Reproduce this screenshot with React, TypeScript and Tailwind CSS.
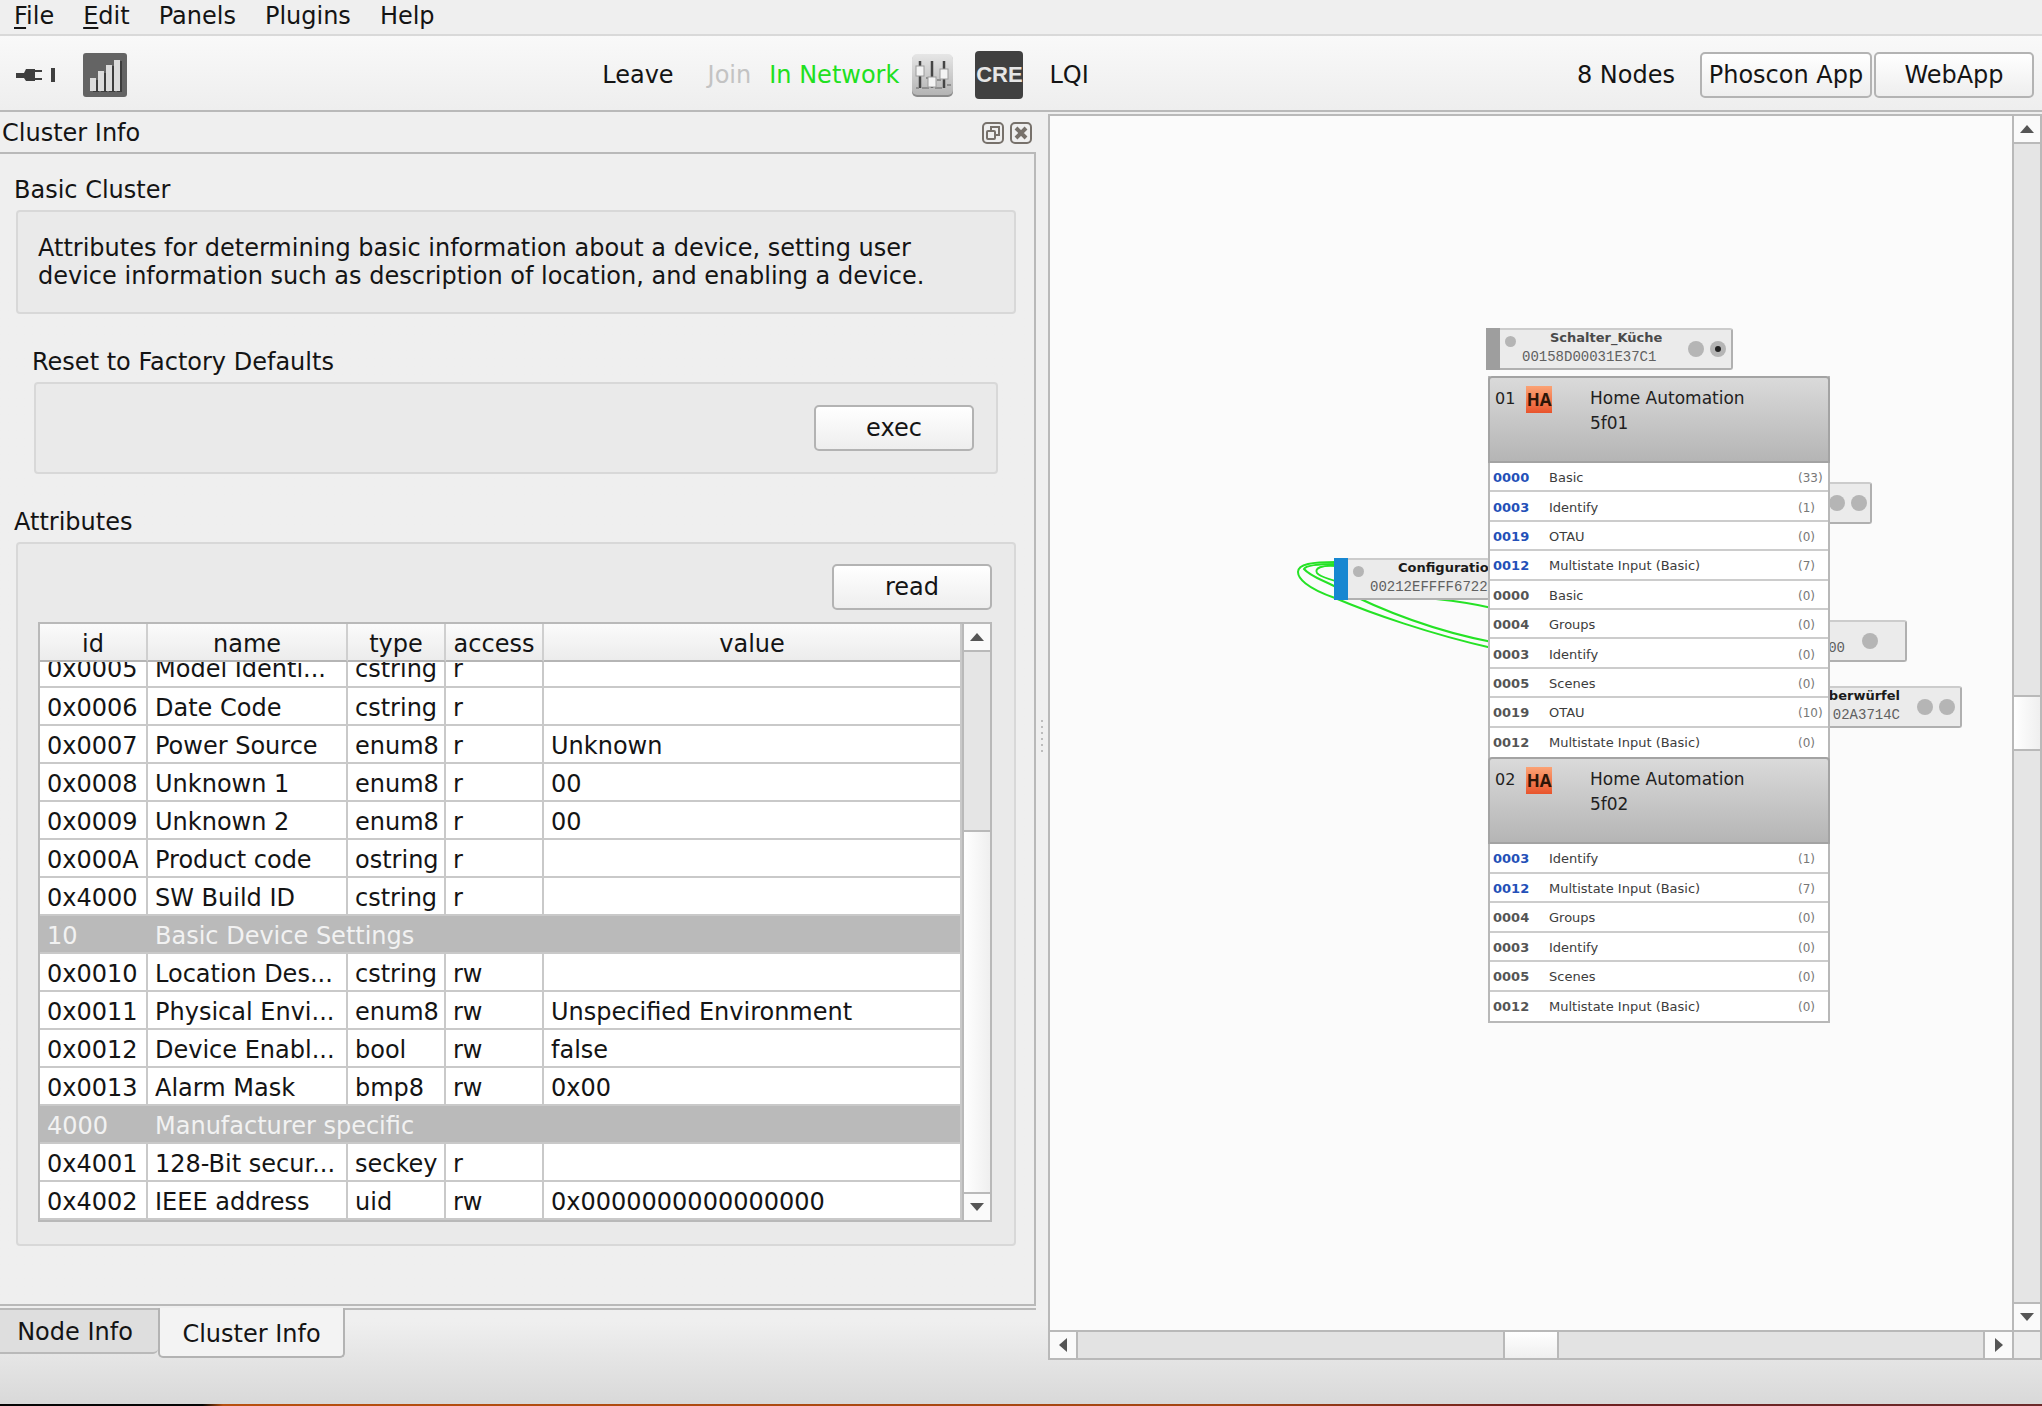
import { useState } from 'react';

const MENUS = ['File', 'Edit', 'Panels', 'Plugins', 'Help'];

const ATTRIBUTES = [
  { id: '0x0006', name: 'Date Code', type: 'cstring', access: 'r', value: '' },
  { id: '0x0007', name: 'Power Source', type: 'enum8', access: 'r', value: 'Unknown' },
  { id: '0x0008', name: 'Unknown 1', type: 'enum8', access: 'r', value: '00' },
  { id: '0x0009', name: 'Unknown 2', type: 'enum8', access: 'r', value: '00' },
  { id: '0x000A', name: 'Product code', type: 'ostring', access: 'r', value: '' },
  { id: '0x4000', name: 'SW Build ID', type: 'cstring', access: 'r', value: '' },
  { id: '10', name: 'Basic Device Settings', section: true },
  { id: '0x0010', name: 'Location Des...', type: 'cstring', access: 'rw', value: '' },
  { id: '0x0011', name: 'Physical Envi...', type: 'enum8', access: 'rw', value: 'Unspecified Environment' },
  { id: '0x0012', name: 'Device Enabl...', type: 'bool', access: 'rw', value: 'false' },
  { id: '0x0013', name: 'Alarm Mask', type: 'bmp8', access: 'rw', value: '0x00' },
  { id: '4000', name: 'Manufacturer specific', section: true },
  { id: '0x4001', name: '128-Bit secur...', type: 'seckey', access: 'r', value: '' },
  { id: '0x4002', name: 'IEEE address', type: 'uid', access: 'rw', value: '0x0000000000000000' },
];

const ENDPOINTS = [
  {
    id: '01',
    device: '5f01',
    clusters: [
      { id: '0000', name: 'Basic', count: 33, server: true },
      { id: '0003', name: 'Identify', count: 1, server: true },
      { id: '0019', name: 'OTAU', count: 0, server: true },
      { id: '0012', name: 'Multistate Input (Basic)', count: 7, server: true },
      { id: '0000', name: 'Basic', count: 0 },
      { id: '0004', name: 'Groups', count: 0 },
      { id: '0003', name: 'Identify', count: 0 },
      { id: '0005', name: 'Scenes', count: 0 },
      { id: '0019', name: 'OTAU', count: 10 },
      { id: '0012', name: 'Multistate Input (Basic)', count: 0 },
    ],
    height: 'h-[294px]',
  },
  {
    id: '02',
    device: '5f02',
    clusters: [
      { id: '0003', name: 'Identify', count: 1, server: true },
      { id: '0012', name: 'Multistate Input (Basic)', count: 7, server: true },
      { id: '0004', name: 'Groups', count: 0 },
      { id: '0003', name: 'Identify', count: 0 },
      { id: '0005', name: 'Scenes', count: 0 },
      { id: '0012', name: 'Multistate Input (Basic)', count: 0 },
    ],
    height: 'h-[177px]',
  },
];

const BUTTON = 'h-[46px] rounded-[5px] border-2 border-[#b3b3b3] bg-linear-to-b from-white to-[#eeeeee] text-center';
const GROUP = 'rounded-[4px] border-2 border-[#d8d8d8] bg-[#eaeaea]';
const CELL = 'h-[38px] border-b-2 border-[#c9c9c9] px-[7px] pt-[3px] whitespace-nowrap overflow-hidden';

function PlugIcon() {
  return (
    <svg width="40" height="18" viewBox="0 0 40 18" fill="#3f3f3f">
      <path d="M0 7h8l2-4h9v12h-9l-2-3H0z" />
      <path d="M19 4h7v2h-7zM19 12h7v2h-7zM35 2h4v14h-4z" />
    </svg>
  );
}

function SignalIcon() {
  return (
    <svg width="44" height="44" viewBox="0 0 44 44">
      <rect width="44" height="44" rx="3" fill="#646464" />
      <g fill="#3d3d3d">
        <path d="M10 27h6v12h-6zM18 20h6v19h-6zM26 13h6v26h-6zM34 8h5v31h-5z" />
      </g>
      <g fill="#dcdcdc">
        <path d="M7 25h6v13H7zM15 18h6v20h-6zM23 12h6v26h-6zM31 7h6v31h-6z" />
      </g>
    </svg>
  );
}

function SlidersIcon() {
  return (
    <svg width="43" height="45" viewBox="0 0 43 45">
      <defs>
        <linearGradient id="mixer" x1="0" y1="0" x2="0" y2="1">
          <stop offset="0" stopColor="#e6e6e6" />
          <stop offset="1" stopColor="#b4b4b4" />
        </linearGradient>
      </defs>
      <rect x="1" y="2" width="41" height="42" rx="5" fill="#8b8b8b" />
      <rect x="1" y="1" width="41" height="41" rx="5" fill="url(#mixer)" />
      <path d="M9 8v27M21 8v27M33 8v27" stroke="#454545" strokeWidth="2.5" />
      <path d="M5 35h3M11 35h7M24 35h7M15 25h3M26 27h4M36 32h4" stroke="#8f8f8f" strokeWidth="2" />
      <g fill="#f3f3f3" stroke="#9c9c9c" strokeWidth="1">
        <rect x="5" y="13" width="8" height="10" />
        <rect x="17" y="24" width="8" height="10" />
        <rect x="29" y="16" width="8" height="10" />
      </g>
    </svg>
  );
}

function Arrow({ dir }: { dir: 'up' | 'down' | 'left' | 'right' }) {
  const d = {
    up: 'M8 4l7 8H1z',
    down: 'M8 12l7-8H1z',
    left: 'M4 8l8-7v14z',
    right: 'M12 8l-8-7v14z',
  }[dir];
  return (
    <svg width="16" height="16" viewBox="0 0 16 16" fill="#555555">
      <path d={d} />
    </svg>
  );
}

// nodes behind the popup have no bar, only their right part shows
function Node({ title, address, place, bar, muted, lights = 2, active }: {
  title?: string;
  address?: string;
  place: string;
  bar?: string;
  muted?: boolean;
  lights?: number;
  active?: boolean;
}) {
  return (
    <div className={`absolute flex h-[42px] rounded-[3px] border-2 border-t-[#cccccc] border-l-[#cccccc] border-r-[#b0b0b0] border-b-[#b0b0b0] bg-[#ebebeb] ${place}`}>
      {bar && <div className={`-my-[2px] -ml-[2px] w-[14px] shrink-0 ${bar}`} />}
      {bar && <div className="mt-[6px] ml-[5px] size-[11px] shrink-0 rounded-full bg-[#b5b5b5]" />}
      <div className={`min-w-0 flex-1 overflow-hidden whitespace-nowrap ${bar ? 'pl-[6px]' : 'flex flex-col items-end pr-[17px]'} ${muted ? 'text-[#4a4a4a]' : 'text-[#1a1a1a]'}`}>
        <div className={`h-[15px] text-[13px] leading-[15px] font-bold ${bar ? 'pl-[28px]' : ''}`}>{title}</div>
        <div className="font-['Liberation_Mono'] text-[14px] leading-[24px] text-[#606060]">{address}</div>
      </div>
      {lights > 0 && (
        <div className="mr-[5px] flex w-[38px] shrink-0 items-center gap-[6px]">
          <div className="size-4 rounded-full bg-[#b5b5b5]" />
          {lights > 1 && (
            <div className="flex size-4 items-center justify-center rounded-full bg-[#b5b5b5]">
              {active && <div className="size-[6px] rounded-full bg-[#222222]" />}
            </div>
          )}
        </div>
      )}
    </div>
  );
}

function Links() {
  return (
    <svg className="absolute top-0 left-0 size-full" fill="none" stroke="#25e225" strokeWidth="2">
      <path d="M286 446C262 446 248 448 248 456C248 462 256 472 285 482C320 497 380 518 442 532" />
      <path d="M286 448C270 448 256 449 254 453C260 460 270 463 284 470C330 494 380 514 442 526" />
      <path d="M286 450C272 449 264 452 267 457C272 464 330 477 386 483C405 485 425 488 442 492" />
    </svg>
  );
}

function ClusterPopup() {
  return (
    <div className="absolute top-[260px] left-[438px] w-[342px] border-x-2 border-b-2 border-[#b8b8b8] bg-white">
      {ENDPOINTS.map(ep => (
        <div key={ep.id}>
          <div className="-mx-[2px] flex h-[87px] rounded-t-[4px] border-2 border-[#a3a3a3] bg-linear-to-b from-[#dadada] to-[#b5b5b5] text-[#1f1f1f]">
            <div className="mt-[10px] w-[31px] pl-[5px] text-[16px] leading-[22px]">{ep.id}</div>
            <div className="mt-[8px] ml-[5px] flex h-[27px] w-[26px] items-center justify-center bg-linear-to-b from-[#fba274] to-[#e8532b] font-['Open_Sans'] text-[17px] font-bold text-[#2c1508]">
              HA
            </div>
            <div className="mt-[8px] ml-[38px] text-[17px] leading-[25px]">
              <div>Home Automation</div>
              <div>{ep.device}</div>
            </div>
          </div>
          <ul className={`grid auto-rows-fr text-[13px] leading-[16px] ${ep.height}`}>
            {ep.clusters.map((c, i) => (
              <li key={i} className="flex items-center border-b-2 border-[#cccccc] pt-[3px] pl-[3px] last:border-transparent">
                <span className={`w-[56px] font-bold ${c.server ? 'text-[#2450b8]' : 'text-[#555555]'}`}>{c.id}</span>
                <span className="flex-1 text-[#3c3c3c]">{c.name}</span>
                <span className="w-[30px] text-[12px] text-[#777777]">({c.count})</span>
              </li>
            ))}
          </ul>
        </div>
      ))}
    </div>
  );
}

export default function App() {
  const [tab, setTab] = useState('Cluster Info');

  return (
    <div className="flex h-screen flex-col overflow-hidden bg-linear-to-b from-[#efefef] from-94% to-[#d8d8d8] font-['DejaVu_Sans',sans-serif] text-[24px] leading-[28px] text-[#141414]">
      <nav className="flex h-9 shrink-0 gap-[29px] border-b-2 border-[#d9d9d9] pl-[14px]">
        {MENUS.map((m, i) => (
          <button key={m} className="h-8">
            {i < 2 ? <><span className="underline underline-offset-3">{m[0]}</span>{m.slice(1)}</> : m}
          </button>
        ))}
      </nav>

      <header className="flex h-[76px] shrink-0 items-center justify-between border-b-2 border-[#b9b9b9] bg-linear-to-b from-[#f9f9f9] to-[#eeeeee] pt-1 pr-2 pl-4">
        <div className="flex items-center gap-[27px]">
          <button aria-label="Connect"><PlugIcon /></button>
          <button aria-label="Signal"><SignalIcon /></button>
        </div>
        <div className="flex items-center pr-[13px]">
          <button>Leave</button>
          <button disabled className="ml-[34px] text-[#c3c3c3]">Join</button>
          <span className="ml-[18px] text-[#20e020]">In Network</span>
          <button aria-label="Settings" className="ml-[12px]"><SlidersIcon /></button>
          <button className="ml-[21px] h-12 w-12 rounded-[4px] bg-[#404040] text-center font-['Liberation_Sans'] text-[22px] font-bold text-[#e6e6e6]">CRE</button>
          <button className="ml-[26px]">LQI</button>
        </div>
        <div className="flex items-center">
          <span className="mr-[25px]">8 Nodes</span>
          <button className={`${BUTTON} mr-[2px] w-[172px]`}>Phoscon App</button>
          <button className={`${BUTTON} w-[160px]`}>WebApp</button>
        </div>
      </header>

      <main className="flex min-h-0 flex-1">
        <section className="flex w-[1036px] shrink-0 flex-col">
          <div className="flex h-10 shrink-0 items-center gap-[6px] pt-[2px] pr-[4px] pl-[2px]">
            <h1 className="flex-1">Cluster Info</h1>
            <button aria-label="Float">
              <svg width="22" height="22" viewBox="0 0 22 22" fill="none" stroke="#77716b" strokeWidth="2">
                <rect x="1" y="1" width="20" height="20" rx="4" />
                <rect x="5" y="9" width="8" height="8" rx="1" />
                <path d="M9 9V5h8v8h-4" />
              </svg>
            </button>
            <button aria-label="Close">
              <svg width="22" height="22" viewBox="0 0 22 22" fill="none" stroke="#77716b" strokeWidth="2">
                <rect x="1" y="1" width="20" height="20" rx="4" />
                <path d="M6 6l10 10M16 6L6 16" strokeWidth="4" />
              </svg>
            </button>
          </div>

          <div className="min-h-0 flex-1 border-2 border-l-0 border-[#b9b9b9] pt-[22px] pr-4 pl-[14px]">
            <h2>Basic Cluster</h2>
            <div className={`${GROUP} mt-[6px] mr-[2px] ml-[2px] py-[22px] pr-12 pl-5`}>
              Attributes for determining basic information about a device, setting user device information such as description of location, and enabling a device.
            </div>

            <div className="mt-[34px] pr-5 pl-[18px]">
              <h2>Reset to Factory Defaults</h2>
              <div className={`${GROUP} mt-[6px] ml-[2px] flex justify-end px-[22px] py-[21px]`}>
                <button className={`${BUTTON} w-[160px]`}>exec</button>
              </div>
            </div>

            <h2 className="mt-[34px]">Attributes</h2>
            <div className={`${GROUP} mt-[6px] mr-[2px] ml-[2px] pt-[20px] pr-[22px] pb-[22px] pl-[20px]`}>
              <div className="flex justify-end">
                <button className={`${BUTTON} w-[160px]`}>read</button>
              </div>

              <div className="mt-3 flex border-2 border-[#b9b9b9] bg-white">
                <div className="min-w-0 flex-1 border-r-2 border-[#c9c9c9]">
                  <table className="w-full table-fixed border-separate border-spacing-0 text-left">
                    <colgroup>
                      <col className="w-[108px]" />
                      <col className="w-[200px]" />
                      <col className="w-[98px]" />
                      <col className="w-[98px]" />
                      <col />
                    </colgroup>
                    <thead>
                      <tr className="bg-linear-to-b from-[#fbfbfb] to-[#ebebeb]">
                        {['id', 'name', 'type', 'access', 'value'].map(h => (
                          <th key={h} className="h-[38px] border-r-2 border-b-2 border-r-[#cfcfcf] border-b-[#b5b5b5] px-0 pt-[3px] pb-0 text-center font-normal last:border-r-0">{h}</th>
                        ))}
                      </tr>
                    </thead>
                    <tbody>
                      {/* first row is scrolled halfway under the header */}
                      <tr>
                        {['0x0005', 'Model Identi...', 'cstring', 'r', ''].map((t, i) => (
                          <td key={i} className="border-r-2 border-b-2 border-[#c9c9c9] px-[7px] py-0 whitespace-nowrap last:border-r-0">
                            <div className="flex h-6 items-end overflow-hidden"><span className="h-[31px] shrink-0">{t}</span></div>
                          </td>
                        ))}
                      </tr>
                      {ATTRIBUTES.map(a => a.section ? (
                        <tr key={a.id} className="bg-[#bababa] text-[#f2f2f2]">
                          <td className={CELL}>{a.id}</td>
                          <td className={CELL} colSpan={4}>{a.name}</td>
                        </tr>
                      ) : (
                        <tr key={a.id}>
                          <td className={`${CELL} border-r-2`}>{a.id}</td>
                          <td className={`${CELL} border-r-2`}>{a.name}</td>
                          <td className={`${CELL} border-r-2`}>{a.type}</td>
                          <td className={`${CELL} border-r-2`}>{a.access}</td>
                          <td className={CELL}>{a.value}</td>
                        </tr>
                      ))}
                    </tbody>
                  </table>
                </div>
                <div className="flex w-[28px] flex-col border-l-2 border-[#b9b9b9] bg-[#e5e5e5]">
                  <button aria-label="Scroll up" className="flex h-7 items-center justify-center border-b-2 border-[#b9b9b9] bg-[#fafafa]"><Arrow dir="up" /></button>
                  <div className="h-[178px]" />
                  <div className="flex-1 border-t-2 border-[#b9b9b9] bg-linear-to-r from-white to-[#efefef]" />
                  <button aria-label="Scroll down" className="flex h-7 items-center justify-center border-t-2 border-[#b9b9b9] bg-[#fafafa]"><Arrow dir="down" /></button>
                </div>
              </div>
            </div>
          </div>

          <div role="tablist" className="mt-[2px] flex h-[52px] shrink-0 items-start border-t-2 border-[#b9b9b9]">
            {['Node Info', 'Cluster Info'].map(t => (
              <button
                key={t}
                role="tab"
                aria-selected={t === tab}
                onClick={() => setTab(t)}
                className={t === tab
                  ? '-mt-[2px] h-[50px] w-[187px] rounded-b-[5px] border-2 border-t-0 border-[#b3b3b3] bg-[#f3f3f3] pt-[4px]'
                  : 'h-[44px] w-[158px] rounded-br-[5px] border-b-2 border-[#b9b9b9] bg-[#dedede] pt-[2px] pr-[8px]'}
              >
                {t}
              </button>
            ))}
          </div>
        </section>

        <div className="flex w-3 shrink-0 flex-col items-center justify-center gap-1">
          {[0, 1, 2, 3, 4, 5].map(i => <div key={i} className="size-[2px] bg-[#bcbcbc]" />)}
        </div>

        <section className="mt-[2px] flex min-w-0 flex-1 flex-col border-2 border-[#b9b9b9]">
          <div className="flex min-h-0 flex-1">
            <div className="relative min-w-0 flex-1 overflow-hidden bg-[#fbfbfb]">
              <Links />
              <Node place="top-[212px] left-[436px] w-[247px]" bar="bg-[#9e9e9e]" title="Schalter_Küche" address="00158D00031E37C1" muted active />
              <Node place="top-[442px] left-[284px] w-[156px]" bar="bg-[#1787d1]" title="Configuration" address="00212EFFFF6722D" lights={0} />
              <Node place="top-[366px] left-[760px] w-[62px]" />
              <Node place="top-[504px] left-[770px] w-[87px]" address="000" lights={1} />
              <Node place="top-[570px] left-[776px] w-[136px]" title="berwürfel" address="02A3714C" />
              <ClusterPopup />
            </div>
            <div className="flex w-[28px] shrink-0 flex-col border-l-2 border-[#b9b9b9] bg-[#e5e5e5]">
              <button aria-label="Scroll up" className="flex h-7 items-center justify-center border-b-2 border-[#b9b9b9] bg-[#fafafa]"><Arrow dir="up" /></button>
              <div className="flex-1" />
              <div className="h-[56px] border-y-2 border-[#b9b9b9] bg-linear-to-r from-white to-[#efefef]" />
              <div className="flex-1" />
              <button aria-label="Scroll down" className="flex h-7 items-center justify-center border-t-2 border-[#b9b9b9] bg-[#fafafa]"><Arrow dir="down" /></button>
            </div>
          </div>
          <div className="flex h-7 shrink-0 border-t-2 border-[#b9b9b9] bg-[#e3e3e3]">
            <button aria-label="Scroll left" className="flex w-7 items-center justify-center border-r-2 border-[#b9b9b9] bg-[#fafafa]"><Arrow dir="left" /></button>
            <div className="flex-1" />
            <div className="w-[56px] border-x-2 border-[#b9b9b9] bg-linear-to-b from-white to-[#efefef]" />
            <div className="flex-1" />
            <button aria-label="Scroll right" className="flex w-[29px] items-center justify-center border-l-2 border-[#b9b9b9] bg-[#fafafa]"><Arrow dir="right" /></button>
            <div className="w-[28px] border-l-2 border-[#b9b9b9] bg-[#ececec]" />
          </div>
        </section>
      </main>

      <footer className="h-[46px] shrink-0 border-b-2 border-black [border-image:linear-gradient(to_right,#050505_10%,#b8500f_11%,#a34512_60%,#6e1f1f_75%,#6b2a2a)_2]" />
    </div>
  );
}
